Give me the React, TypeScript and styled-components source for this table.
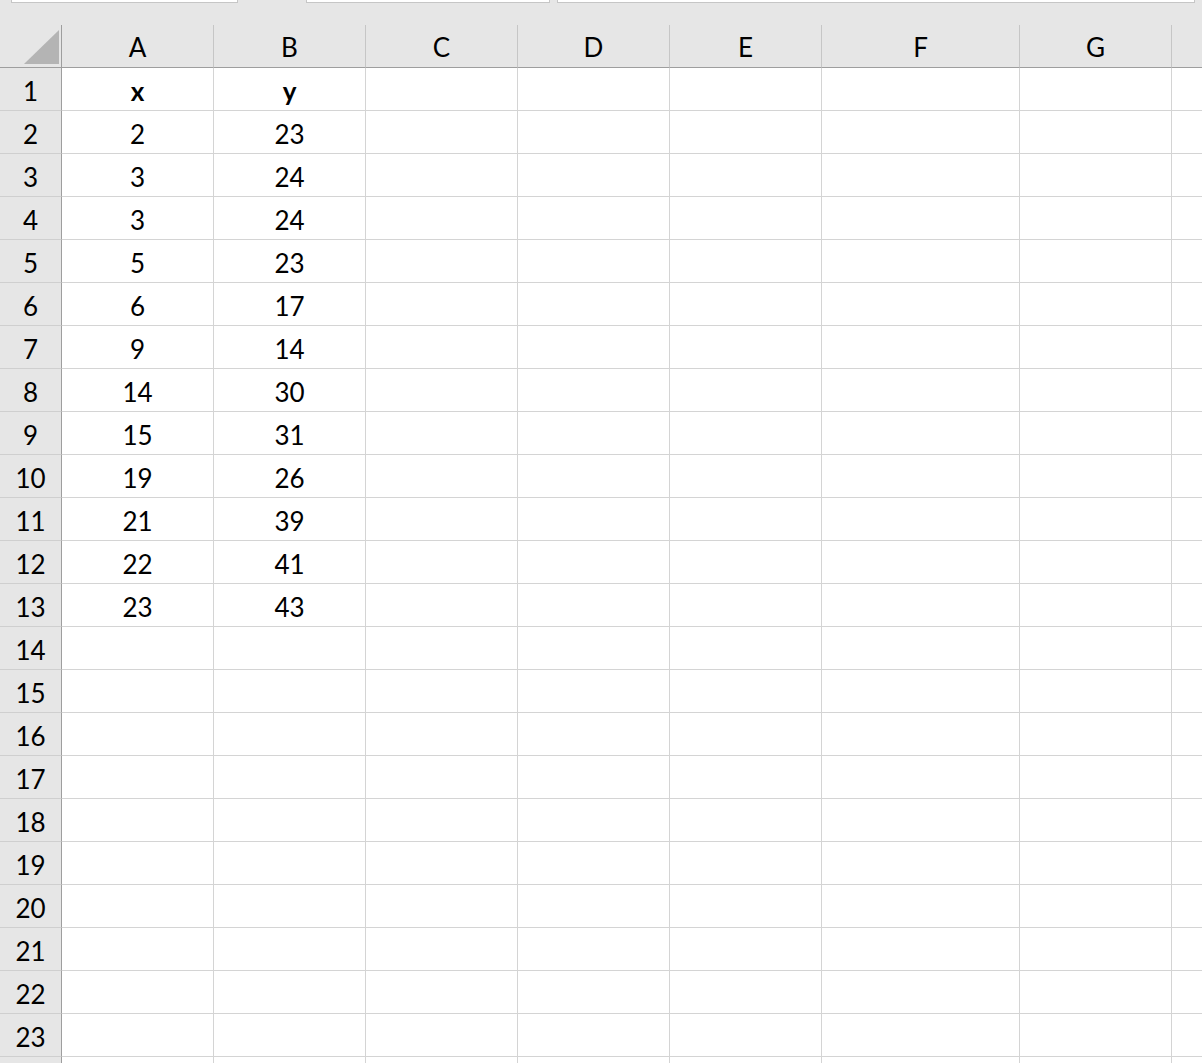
import React from "react";
import styled, { createGlobalStyle } from "styled-components";

const columns = ["A", "B", "C", "D", "E", "F", "G", ""];
const columnWidths = [152, 152, 152, 152, 152, 198, 152, 60];

const data: Array<[string, string]> = [
  ["x", "y"],
  ["2", "23"],
  ["3", "24"],
  ["3", "24"],
  ["5", "23"],
  ["6", "17"],
  ["9", "14"],
  ["14", "30"],
  ["15", "31"],
  ["19", "26"],
  ["21", "39"],
  ["22", "41"],
  ["23", "43"],
];

// 23 labelled rows fit the window; one more row peeks in at the bottom
const VISIBLE_ROWS = 23;

const GlobalStyle = createGlobalStyle`
  html, body {
    margin: 0;
    padding: 0;
    background: #ffffff;
  }
  body {
    font-family: Lato, "Liberation Sans", sans-serif;
    color: #000000;
  }
`;

export default function App() {
  const template = `62px ${columnWidths.map((w) => `${w}px`).join(" ")}`;

  return (
    <>
      <GlobalStyle />
      <Page>
        <TopStrip>
          <NameBox />
          <FormulaButtons />
          <InputBox $width="242px" />
          <InputBox $grow />
        </TopStrip>
        <Sheet style={{ gridTemplateColumns: template }}>
          <Corner>
            <SelectAll />
          </Corner>
          {columns.map((col, i) => (
            <ColumnHeader key={`h${i}`}>{col}</ColumnHeader>
          ))}
          {Array.from({ length: VISIBLE_ROWS + 1 }).map((_, r) => {
            const row = data[r];
            return (
              <React.Fragment key={`r${r}`}>
                <RowHeader>{r < VISIBLE_ROWS ? r + 1 : ""}</RowHeader>
                {columns.map((_, c) => (
                  <Cell key={`c${r}-${c}`} $bold={r === 0}>
                    {row && c < 2 ? row[c] : ""}
                  </Cell>
                ))}
              </React.Fragment>
            );
          })}
        </Sheet>
      </Page>
    </>
  );
}

const Page = styled.div`
  width: 1202px;
  height: 1063px;
  overflow: hidden;
  background: #ffffff;
`;

const TopStrip = styled.div`
  display: flex;
  align-items: flex-start;
  height: 25px;
  padding-left: 11px;
  background: #e6e6e6;
`;

const NameBox = styled.div`
  width: 225px;
  height: 2px;
  background: #ffffff;
  border: 1px solid #c6c6c6;
  border-top: none;
`;

const FormulaButtons = styled.div`
  width: 68px;
`;

const InputBox = styled.div<{ $width?: string; $grow?: boolean }>`
  width: ${(p) => p.$width || "auto"};
  flex: ${(p) => (p.$grow ? 1 : "none")};
  height: 2px;
  margin-right: 7px;
  background: #ffffff;
  border: 1px solid #c6c6c6;
  border-top: none;
`;

const Sheet = styled.div`
  display: grid;
  grid-auto-rows: 43px;
`;

const HeaderBase = styled.div`
  display: flex;
  align-items: center;
  justify-content: center;
  box-sizing: border-box;
  background: #e6e6e6;
  font-size: 26px;
  line-height: 30px;
`;

const Corner = styled(HeaderBase)`
  align-items: flex-end;
  justify-content: flex-end;
  padding: 0 2px 3px 0;
  border-right: 1px solid #9e9e9e;
  border-bottom: 1px solid #9e9e9e;
`;

const SelectAll = styled.div`
  width: 35px;
  height: 34px;
  background: #b4b4b4;
  clip-path: polygon(100% 0, 100% 100%, 0 100%);
`;

const ColumnHeader = styled(HeaderBase)`
  padding-top: 2px;
  border-right: 1px solid #c6c6c6;
  border-bottom: 1px solid #9e9e9e;
`;

const RowHeader = styled(HeaderBase)`
  padding-top: 4px;
  border-right: 1px solid #9e9e9e;
  border-bottom: 1px solid #cfcfcf;
`;

const Cell = styled.div<{ $bold?: boolean }>`
  display: flex;
  align-items: center;
  justify-content: center;
  box-sizing: border-box;
  padding-top: 4px;
  border-right: 1px solid #d4d4d4;
  border-bottom: 1px solid #d4d4d4;
  font-size: 26px;
  line-height: 30px;
  font-weight: ${(p) => (p.$bold ? 700 : 400)};
`;
